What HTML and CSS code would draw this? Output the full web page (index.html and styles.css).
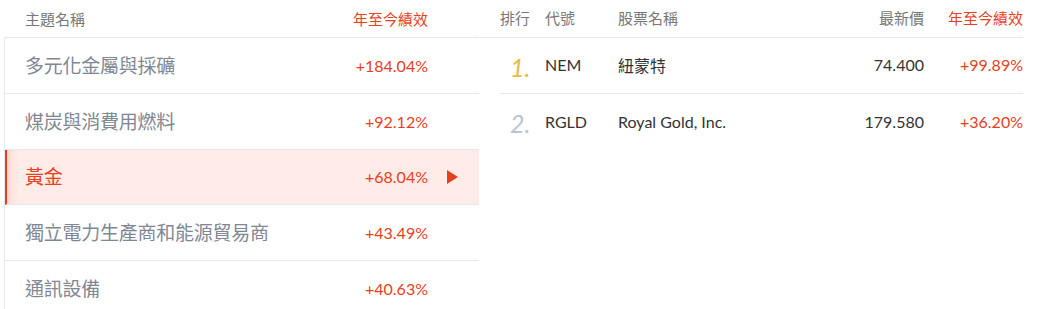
FILE: index.html
```html
<!DOCTYPE html>
<html lang="zh-Hant">
<head>
<meta charset="utf-8">
<link rel="stylesheet" href="styles.css">
</head>
<body>
<div class="page">
  <section class="themes">
    <div class="themes-head">
      <span class="th-name">主題名稱</span>
      <span class="th-perf">年至今績效</span>
    </div>
    <ul class="theme-list">
      <li class="theme"><span class="t-name">多元化金屬與採礦</span><span class="t-perf">+184.04%</span><span class="t-arrow"></span></li>
      <li class="theme"><span class="t-name">煤炭與消費用燃料</span><span class="t-perf">+92.12%</span><span class="t-arrow"></span></li>
      <li class="theme active"><span class="t-name">黃金</span><span class="t-perf">+68.04%</span><span class="t-arrow"><svg width="11" height="14" viewBox="0 0 11 14"><path d="M0 0 L11 7 L0 14 Z" fill="#e8401c"/></svg></span></li>
      <li class="theme"><span class="t-name">獨立電力生產商和能源貿易商</span><span class="t-perf">+43.49%</span><span class="t-arrow"></span></li>
      <li class="theme"><span class="t-name">通訊設備</span><span class="t-perf">+40.63%</span><span class="t-arrow"></span></li>
    </ul>
  </section>
  <section class="stocks">
    <div class="stocks-head">
      <span class="c-rank">排行</span>
      <span class="c-code">代號</span>
      <span class="c-name">股票名稱</span>
      <span class="c-price">最新價</span>
      <span class="c-perf red">年至今績效</span>
    </div>
    <div class="stock">
      <span class="c-rank"><span class="rank gold">1.</span></span>
      <span class="c-code">NEM</span>
      <span class="c-name">紐蒙特</span>
      <span class="c-price">74.400</span>
      <span class="c-perf red">+99.89%</span>
    </div>
    <div class="stock last">
      <span class="c-rank"><span class="rank silver">2.</span></span>
      <span class="c-code">RGLD</span>
      <span class="c-name">Royal Gold, Inc.</span>
      <span class="c-price">179.580</span>
      <span class="c-perf red">+36.20%</span>
    </div>
  </section>
</div>
</body>
</html>
```
FILE: styles.css
```css
* { box-sizing: border-box; }
html, body { margin: 0; padding: 0; background: #fff; }
body {
  font-family: Lato, "Noto Sans CJK TC", sans-serif;
  color: #333;
}
.page {
  display: flex;
  width: 1043px;
  padding-left: 4px;
}
.themes {
  width: 475px;
  flex: none;
}
.themes-head {
  height: 37px;
  display: flex;
  align-items: center;
  justify-content: space-between;
  padding: 0 51px 1px 21px;
  font-size: 15px;
  color: #777;
}
.th-perf { color: #e8401c; }
.theme-list {
  list-style: none;
  margin: 0;
  padding: 0;
  border-top: 1px solid #e4e8f1;
  border-left: 1px solid #e4e8f1;
}
.theme {
  height: 56px;
  border-bottom: 1px solid #e4e8f1;
  display: flex;
  align-items: center;
  padding-left: 20px;
  padding-bottom: 3px;
}
.theme:nth-child(3) { height: 55px; }
.theme:last-child { border-bottom: none; }
.t-name {
  flex: 1;
  font-size: 19px;
  letter-spacing: -0.25px;
  color: #7f8794;
}
.t-perf {
  font-size: 16px;
  color: #e8401c;
  padding-top: 2px;
}
.t-arrow {
  width: 51px;
  display: flex;
  align-items: center;
  padding-left: 19px;
  padding-top: 3px;
}
.theme.active {
  background: #ffebe7;
  border-left: 2px solid #e8401c;
  padding-left: 18px;
  box-shadow: inset 10px 0 10px -8px rgba(232, 64, 28, 0.18);
}
.theme.active .t-name { color: #e8401c; }

.stocks {
  width: 543px;
  flex: none;
  margin-left: 1px;
}
.stocks-head {
  height: 38px;
  display: flex;
  align-items: center;
  border-bottom: 1px solid #e4e8f1;
  padding-left: 20px;
  padding-bottom: 2px;
  font-size: 15px;
  color: #777;
}
.stock {
  height: 56px;
  margin-left: 20px;
  display: flex;
  align-items: center;
  border-bottom: 1px solid #e4e8f1;
  font-size: 16px;
  color: #333;
  padding-bottom: 2px;
}
.stock.last { border-bottom: none; }
.c-rank { width: 45px; flex: none; }
.c-code { width: 73px; flex: none; }
.c-name { flex: 1; }
.c-price { width: 120px; text-align: right; }
.c-perf { width: 99px; text-align: right; }
.red { color: #e8401c; }
.rank {
  display: inline-block;
  padding-left: 10px;
  padding-top: 4px;
  font-size: 25px;
  font-style: italic;
  font-weight: 400;
}
.gold { color: #e6bd3f; }
.silver { color: #b9c3d3; }
```
